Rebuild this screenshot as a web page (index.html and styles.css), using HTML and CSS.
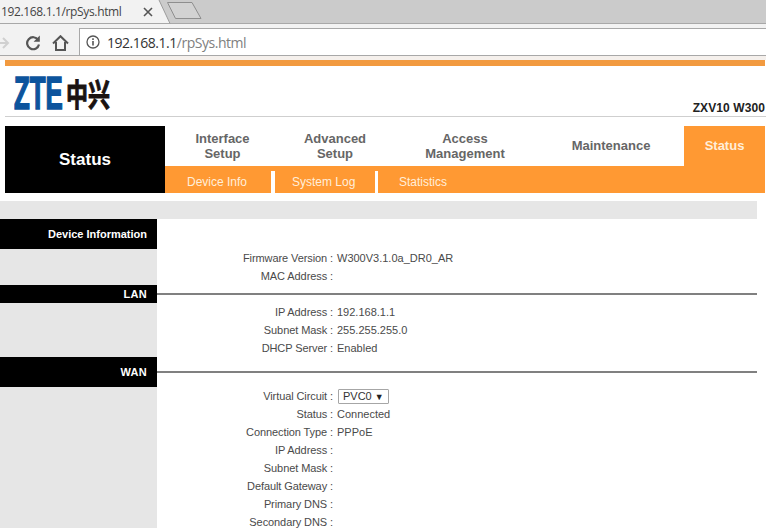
FILE: index.html
```html
<!DOCTYPE html>
<html lang="en">
<head>
<meta charset="utf-8">
<title>192.168.1.1/rpSys.html</title>
<link rel="stylesheet" href="styles.css">
</head>
<body>
<div class="tabstrip">
  <div class="tab">
    <span class="tab-title">192.168.1.1/rpSys.html</span>
    <svg class="tab-close" width="10" height="10" viewBox="0 0 10 10"><path d="M1 1l8 8M9 1l-8 8" stroke="#555" stroke-width="1.6"/></svg>
  </div>
  <svg class="tab-edge" width="46" height="24" viewBox="0 0 46 24">
    <path d="M0 0H1L12 23H0Z" fill="#f2f2f2"/>
    <path d="M1 0L12 23.5" stroke="#9a9a9a" fill="none"/>
    <path d="M9.5 2.5H34L43 18.5H17.5Z" fill="#d2d2d2" stroke="#8e8e8e"/>
  </svg>
</div>
<div class="toolbar">
  <div class="tool-icons">
    <svg class="ic-back" width="10" height="14" viewBox="0 0 10 14"><path d="M0 7H8M3 2l5 5-5 5" stroke="#d0d0d0" stroke-width="2" fill="none"/></svg>
    <svg class="ic-reload" width="16" height="16" viewBox="0 0 16 16"><path d="M13.2 5A6 6 0 1 0 14 9.5" stroke="#555" stroke-width="2.2" fill="none"/><path d="M14.8 0.6V6.8H8.6Z" fill="#555"/></svg>
    <svg class="ic-home" width="17" height="16" viewBox="0 0 17 16"><path d="M1 8.5L8.5 1.2 16 8.5M4 7V15H13V7" stroke="#555" stroke-width="2" fill="none"/></svg>
  </div>
  <div class="omnibox">
    <svg class="ic-info" width="14" height="14" viewBox="0 0 14 14"><circle cx="7" cy="7" r="6" stroke="#555" stroke-width="1.3" fill="none"/><path d="M7 6V10.5M7 3.2V5" stroke="#555" stroke-width="1.6"/></svg>
    <span class="url"><span class="url-host">192.168.1.1</span>/rpSys.html</span>
  </div>
</div>

<div class="page-top"><div class="accent"></div></div>

<header class="brand">
  <div class="logo"><span class="logo-latin">ZTE</span><span class="logo-cjk">中兴</span></div>
  <div class="model">ZXV10 W300</div>
</header>

<nav class="nav">
  <div class="nav-title">Status</div>
  <div class="nav-main">
    <div class="nav-tabs">
      <a class="tab-a w115">Interface<br>Setup</a>
      <a class="tab-a w110">Advanced<br>Setup</a>
      <a class="tab-a w150">Access<br>Management</a>
      <a class="tab-a w144">Maintenance</a>
      <a class="tab-a tab-active">Status</a>
    </div>
    <div class="nav-sub">
      <a class="sub sub-1">Device Info</a>
      <a class="sub sub-2">System Log</a>
      <a class="sub sub-3">Statistics</a>
    </div>
  </div>
</nav>

<div class="graybar"></div>

<main class="content">
  <div class="row head tall"><div class="side black">Device Information</div></div>
  <div class="row"><div class="side"></div><div class="label">Firmware Version :</div><div class="value">W300V3.1.0a_DR0_AR</div></div>
  <div class="row"><div class="side"></div><div class="label">MAC Address :</div><div class="value"></div></div>

  <div class="row head"><div class="side black caps">LAN</div><div class="rule"></div></div>
  <div class="row"><div class="side"></div><div class="label">IP Address :</div><div class="value">192.168.1.1</div></div>
  <div class="row"><div class="side"></div><div class="label">Subnet Mask :</div><div class="value">255.255.255.0</div></div>
  <div class="row"><div class="side"></div><div class="label">DHCP Server :</div><div class="value">Enabled</div></div>

  <div class="row head tall"><div class="side black caps">WAN</div><div class="rule"></div></div>
  <div class="row"><div class="side"></div><div class="label">Virtual Circuit :</div><div class="value"><span class="select">PVC0 <span class="arrow">▼</span></span></div></div>
  <div class="row"><div class="side"></div><div class="label">Status :</div><div class="value">Connected</div></div>
  <div class="row"><div class="side"></div><div class="label">Connection Type :</div><div class="value">PPPoE</div></div>
  <div class="row"><div class="side"></div><div class="label">IP Address :</div><div class="value"></div></div>
  <div class="row"><div class="side"></div><div class="label">Subnet Mask :</div><div class="value"></div></div>
  <div class="row"><div class="side"></div><div class="label">Default Gateway :</div><div class="value"></div></div>
  <div class="row"><div class="side"></div><div class="label">Primary DNS :</div><div class="value"></div></div>
  <div class="row"><div class="side"></div><div class="label">Secondary DNS :</div><div class="value"></div></div>
</main>
</body>
</html>
```
FILE: styles.css
```css
* { box-sizing: border-box; }
html, body { margin: 0; padding: 0; }
body {
  width: 766px;
  height: 528px;
  overflow: hidden;
  background: #fff;
  font-family: "Liberation Sans", Arial, sans-serif;
  font-size: 11px;
  color: #4a4a4a;
}

/* browser chrome */
.tabstrip { display: flex; height: 24px; background: #cbcbcb; border-bottom: 1px solid #a8a8a8; }
.tab { width: 158px; height: 23px; background: #f2f2f2; display: flex; align-items: center; padding-left: 1px; }
.tab-title { width: 142px; font-family: "Open Sans", sans-serif; font-size: 12px; letter-spacing: -0.35px; color: #444; }
.tab-close { flex: none; }
.tab-edge { flex: none; }
.toolbar { display: flex; height: 32px; background: #f2f2f2; border-bottom: 1px solid #a8a8a8; }
.tool-icons { width: 79px; display: flex; align-items: center; padding-top: 6px; }
.ic-back { margin-right: 15px; }
.ic-reload { margin-right: 11px; }
.omnibox { flex: 1; margin-top: 4px; background: #fff; border-top: 1px solid #a8a8a8; border-left: 1px solid #a8a8a8; display: flex; align-items: center; padding-left: 6px; }
.ic-info { margin-right: 7px; }
.url { font-family: "Open Sans", sans-serif; font-size: 14px; letter-spacing: -0.48px; color: #808080; }
.url-host { color: #333; }

/* page top */
.page-top { height: 10px; padding: 4px 1px 0 5px; background: linear-gradient(#f5f0ec 4px, #fff 4px); }
.accent { height: 6px; background: #f29a3f; }

.brand { height: 51px; margin-left: 5px; padding: 10px 1px 0 9px; border-bottom: 1px solid #cfcfcf; display: flex; justify-content: space-between; }
.logo { display: flex; align-items: center; height: 33px; color: #1a1311; }
.logo-latin { width: 52px; font-weight: 700; font-size: 47px; line-height: 33px; color: #0c549d; transform: scaleX(0.55); transform-origin: left center; -webkit-text-stroke: 1.7px #0c549d; }
.logo-cjk { font-family: "Noto Sans CJK SC", sans-serif; font-weight: 700; font-size: 22px; line-height: 33px; transform: scaleY(1.4); transform-origin: center; -webkit-text-stroke: 0.7px #1a1311; }
.model { align-self: flex-end; margin-bottom: 1px; font-weight: 700; font-size: 12px; letter-spacing: 0.1px; color: #222; line-height: 14px; }

/* nav */
.nav { display: flex; height: 67px; margin: 9px 1px 0 5px; }
.nav-title { width: 160px; background: #000; color: #fff; font-weight: 700; font-size: 17px; text-align: center; line-height: 67px; }
.nav-main { flex: 1; display: flex; flex-direction: column; }
.nav-tabs { height: 40px; display: flex; }
.tab-a { display: flex; align-items: center; justify-content: center; text-align: center; font-weight: 700; font-size: 13px; line-height: 15px; color: #666; padding-bottom: 1px; }
.w115 { width: 115px; }
.w110 { width: 110px; }
.w150 { width: 150px; }
.w144 { width: 144px; padding-right: 2px; }
.tab-active { flex: 1; background: #ff9933; color: #ffeeda; }
.nav-sub { flex: 1; background: #ff9933; display: flex; }
.sub { height: 22px; margin-top: 5px; font-size: 12px; line-height: 22px; color: #ffeeda; }
.sub-1 { width: 110px; padding-left: 22px; border-right: 4px solid #fff; }
.sub-2 { width: 103px; padding-left: 17px; border-right: 3px solid #fff; }
.sub-3 { padding-left: 21px; }

.graybar { height: 18px; width: 757px; margin-top: 8px; background: #e6e6e6; }

/* status table */
.content { display: flex; flex-direction: column; }
.row { display: flex; height: 18px; line-height: 18px; }
.row.tall { height: 30px; }
.side { width: 157px; flex: none; background: #e6e6e6; }
.side.black { background: #000; color: #fff; font-weight: 700; text-align: right; padding-right: 10px; line-height: 30px; }
.head:not(.tall) .side.black { line-height: 18px; }
.caps { letter-spacing: 0.3px; }
.label { width: 176px; text-align: right; flex: none; letter-spacing: -0.09px; }
.value { padding-left: 4px; }
.rule { width: 600px; height: 2px; background: #808080; margin-top: 8px; }
.row.tall .rule { margin-top: 14px; }
.select { display: inline-block; width: 51px; height: 15px; margin: 2px 0 0 1px; padding-left: 4px; line-height: 13px; border: 1px solid #a6a6a6; border-radius: 1px; vertical-align: top; color: #333; }
.arrow { font-size: 9px; color: #222; }
```
